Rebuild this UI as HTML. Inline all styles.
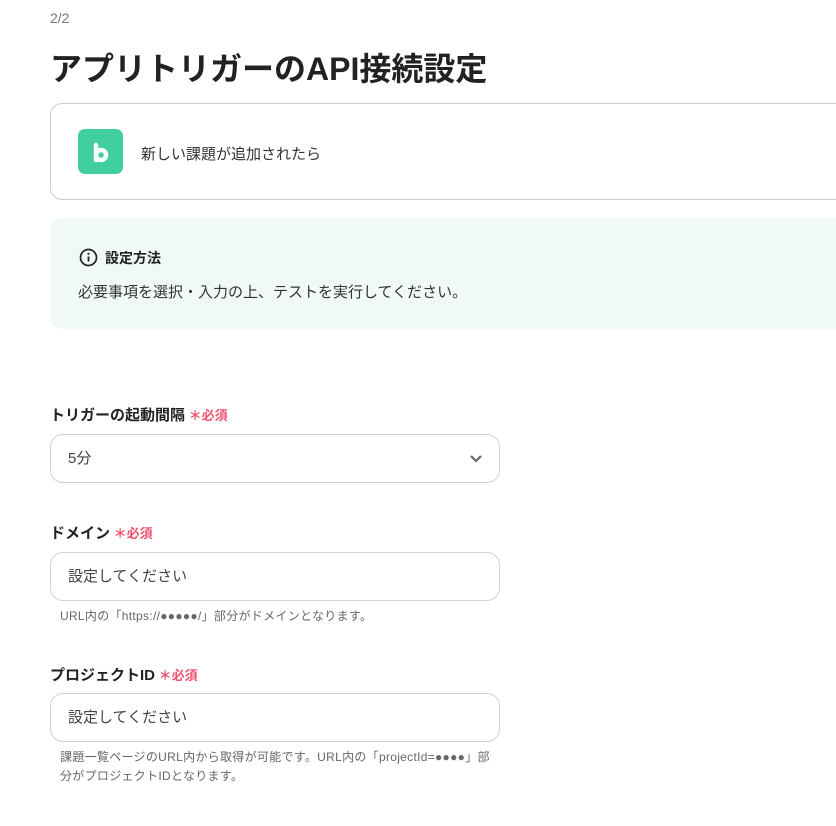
<!DOCTYPE html>
<html><head><meta charset="utf-8"><style>
*{box-sizing:border-box;margin:0;padding:0}
body{width:836px;height:826px;overflow:hidden;background:#fff;font-family:"Liberation Sans","Noto Sans CJK JP",sans-serif;color:#222;position:relative}
.a{position:absolute}
.req{color:#f0506e;font-size:13px;font-weight:bold}
.lbl{font-size:15px;font-weight:bold;color:#222}
.in{position:absolute;left:50px;width:450px;height:49px;border:1px solid #ccd3dc;border-radius:13px;font-size:15px;color:#444;padding:0 0 0 17px;line-height:47px}
.hint{font-size:12px;color:#666;left:60px;letter-spacing:0.3px}
</style></head><body>
<div class="a" style="left:50px;top:10px;font-size:14px;color:#777">2/2</div>
<div class="a" style="left:50px;top:44px;font-size:32px;font-weight:bold;color:#222">アプリトリガーのAPI接続設定</div>
<div class="a" style="left:50px;top:103px;width:820px;height:97px;border:1px solid #ccc;border-radius:12px"></div>
<div class="a" style="left:78px;top:129px;width:45px;height:45px;background:#42cf9e;border-radius:7px"></div>
<svg class="a" style="left:78px;top:129px" width="45" height="45"><path d="M18 16v15" stroke="#fff" stroke-width="4.5" stroke-linecap="round"/><circle cx="23" cy="26" r="5" fill="none" stroke="#fff" stroke-width="4.5"/></svg>
<div class="a" style="left:141px;top:143px;font-size:15px;color:#333">新しい課題が追加されたら</div>
<div class="a" style="left:50px;top:218px;width:800px;height:111px;background:#f1f9f8;border-radius:12px"></div>
<svg class="a" style="left:79px;top:248px" width="19" height="19"><circle cx="9.5" cy="9.5" r="8" fill="none" stroke="#222" stroke-width="1.7"/><circle cx="9.5" cy="5.8" r="1.1" fill="#222"/><path d="M9.5 8.5v5" stroke="#222" stroke-width="1.8"/></svg>
<div class="a" style="left:105px;top:248px;font-size:14px;font-weight:bold">設定方法</div>
<div class="a" style="left:78px;top:281px;font-size:15px;color:#333">必要事項を選択・入力の上、テストを実行してください。</div>
<div class="a lbl" style="left:50px;top:404px">トリガーの起動間隔<span class="req"> ＊必須</span></div>
<div class="in" style="top:434px">5分</div>
<svg class="a" style="left:468px;top:453px" width="16" height="12"><path d="M3 3l5 5 5-5" fill="none" stroke="#666" stroke-width="2.2"/></svg>
<div class="a lbl" style="left:50px;top:522px">ドメイン<span class="req"> ＊必須</span></div>
<div class="in" style="top:552px">設定してください</div>
<div class="a hint" style="top:607px">URL内の「https://●●●●●/」部分がドメインとなります。</div>
<div class="a lbl" style="left:50px;top:664px">プロジェクトID<span class="req"> ＊必須</span></div>
<div class="in" style="top:693px">設定してください</div>
<div class="a hint" style="top:748px;width:440px;line-height:19px">課題一覧ページのURL内から取得が可能です。URL内の「projectId=●●●●」部<br>分がプロジェクトIDとなります。</div>
</body></html>
